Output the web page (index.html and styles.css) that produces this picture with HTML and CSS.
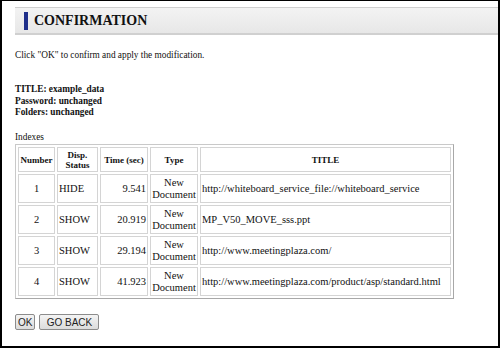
FILE: index.html
```html
<!DOCTYPE html>
<html>
<head>
<meta charset="utf-8">
<link rel="stylesheet" href="styles.css">
</head>
<body>
<div class="frame">
  <div class="titlebar"><span class="mark"></span><h1>CONFIRMATION</h1></div>
  <div class="content">
    <p class="intro">Click "OK" to confirm and apply the modification.</p>
    <div class="summary">
      <div>TITLE: example_data</div>
      <div>Password: unchanged</div>
      <div>Folders: unchanged</div>
    </div>
    <div class="caption">Indexes</div>
    <table class="idx">
      <thead>
        <tr>
          <th class="c-num">Number</th>
          <th class="c-disp">Disp.<br>Status</th>
          <th class="c-time">Time (sec)</th>
          <th class="c-type">Type</th>
          <th class="c-title">TITLE</th>
        </tr>
      </thead>
      <tbody>
        <tr><td class="num">1</td><td>HIDE</td><td class="time">9.541</td><td class="type">New Document</td><td>http://whiteboard_service_file://whiteboard_service</td></tr>
        <tr><td class="num">2</td><td>SHOW</td><td class="time">20.919</td><td class="type">New Document</td><td>MP_V50_MOVE_sss.ppt</td></tr>
        <tr><td class="num">3</td><td>SHOW</td><td class="time">29.194</td><td class="type">New Document</td><td>http://www.meetingplaza.com/</td></tr>
        <tr><td class="num">4</td><td>SHOW</td><td class="time">41.923</td><td class="type">New Document</td><td>http://www.meetingplaza.com/product/asp/standard.html</td></tr>
      </tbody>
    </table>
    <div class="buttons">
      <button class="btn">OK</button>
      <button class="btn wide">GO BACK</button>
    </div>
  </div>
</div>
</body>
</html>
```
FILE: styles.css
```css
html, body {
  margin: 0;
  padding: 0;
  background: #fff;
}
.frame {
  box-sizing: border-box;
  width: 500px;
  height: 348px;
  border: 2px solid #000;
  border-top-width: 1px;
  font-family: "Liberation Serif", "Times New Roman", serif;
  color: #111;
  padding-top: 6px;
}
.titlebar {
  margin-left: 13px;
  height: 25px;
  display: flex;
  align-items: center;
  border-top: 1px solid #cfcfcf;
  border-bottom: 2px solid #d0d0d0;
  background: linear-gradient(#f3f3f3, #e7e7e7);
}
.mark {
  width: 4px;
  height: 18px;
  margin-left: 9px;
  background: #1f2f8a;
}
.titlebar h1 {
  margin: 0 0 0 6px;
  font-size: 14px;
  font-weight: bold;
  color: #111;
}
.content {
  padding-left: 13px;
}
.intro {
  margin: 14px 0 0 0;
  font-size: 9.3px;
  line-height: 12px;
}
.summary {
  margin-top: 23px;
  font-size: 9.3px;
  font-weight: bold;
  line-height: 11.7px;
}
.caption {
  margin-top: 13px;
  font-size: 9.3px;
  line-height: 11px;
}
.idx {
  margin-top: 1px;
  width: 439px;
  table-layout: fixed;
  border-collapse: separate;
  border-spacing: 2px;
  border: 1px solid #c9c9c9;
  border-right-color: #a8a8a8;
  border-bottom-color: #a8a8a8;
}
.idx th, .idx td {
  border: 1px solid #d4d4d4;
  padding: 1px 1px;
  font-size: 10.5px;
  line-height: 12px;
}
.idx th {
  font-size: 9px;
  line-height: 10px;
  font-weight: bold;
  height: 21px;
  text-align: center;
}
.idx td {
  height: 25px;
}
.c-num { width: 33px; }
.c-disp { width: 37px; }
.c-time { width: 44px; }
.c-type { width: 44px; }
.idx td.num { text-align: center; }
.idx td.time { text-align: right; }
.idx td.type { text-align: center; }
.buttons {
  margin-top: 15px;
  display: flex;
  gap: 4px;
}
.btn {
  font-family: "Liberation Sans", Arial, sans-serif;
  font-size: 10px;
  height: 16px;
  padding: 0 2px;
  border: 1px solid #8c8c8c;
  border-radius: 2px;
  background: linear-gradient(#f4f4f4, #dcdcdc);
  color: #222;
}
.btn.wide {
  width: 60px;
}
```
